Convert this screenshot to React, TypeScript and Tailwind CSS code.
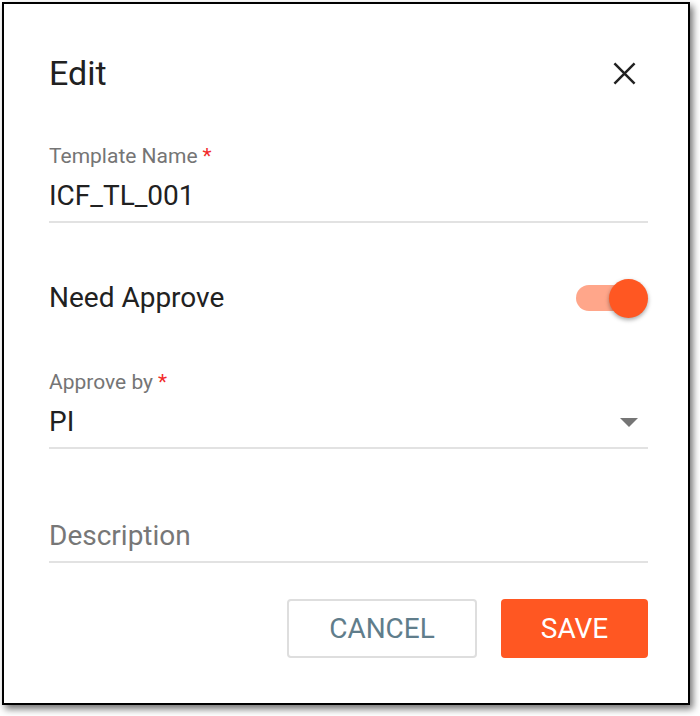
import React from "react";

function Label({ text }: { text: string }) {
  return (
    <div className="h-[24px] flex items-center text-[21px] text-[#757575] leading-none">
      {text}
      <span className="ml-[5px] text-[#f22b2b]">*</span>
    </div>
  );
}

export default function App() {
  return (
    <div className="w-[700px] h-[716px] bg-white relative" style={{ fontFamily: "Roboto, 'Noto Sans', sans-serif" }}>
      <div className="ml-[2px] mt-[2px] w-[688px] h-[703px] border-2 border-black bg-white shadow-[3px_4px_7px_rgba(0,0,0,0.55)] flex flex-col pl-[45px] pr-[40px]">
        <div className="mt-[44px] h-[50px] flex items-center justify-between">
          <div className="text-[34px] text-[#212121] leading-none">Edit</div>
          <svg width="23" height="23" viewBox="0 0 24 24" className="mr-[12px]">
            <path d="M1.5 1.5L22.5 22.5M22.5 1.5L1.5 22.5" stroke="#222" strokeWidth="2.6" strokeLinecap="butt" />
          </svg>
        </div>

        <div className="mt-[46px]">
          <Label text="Template Name" />
        </div>
        <div className="mt-[10px] h-[36px] flex items-center text-[28px] text-[#212121] leading-none">ICF_TL_001</div>
        <div className="mt-[7px] h-[2px] bg-[#e2e2e2]" />

        <div className="mt-[55px] h-[40px] flex items-center justify-between">
          <div className="text-[28px] text-[#212121] leading-none">Need Approve</div>
          <div className="relative w-[72px] h-[40px]">
            <div className="absolute left-0 top-[7px] w-[62px] h-[26px] rounded-full bg-[#ffa68a]" />
            <div className="absolute right-0 top-[1px] w-[39px] h-[39px] rounded-full bg-[#ff5722] shadow-[0_2px_4px_rgba(0,0,0,0.35)]" />
          </div>
        </div>

        <div className="mt-[52px]">
          <Label text="Approve by" />
        </div>
        <div className="mt-[10px] h-[36px] flex items-center justify-between text-[28px] text-[#212121] leading-none">
          <span>PI</span>
          <svg width="18" height="9" viewBox="0 0 18 9" className="mr-[10px]">
            <path d="M0 0L18 0L9 9Z" fill="#757575" />
          </svg>
        </div>
        <div className="mt-[7px] h-[2px] bg-[#e2e2e2]" />

        <div className="mt-[69px] h-[36px] flex items-center text-[28px] text-[#777777] leading-none">Description</div>
        <div className="mt-[7px] h-[2px] bg-[#e2e2e2]" />

        <div className="mt-[36px] flex justify-end gap-[24px]">
          <div className="w-[190px] h-[59px] border-2 border-[#dedede] rounded-[4px] flex items-center justify-center text-[28px] text-[#607d8b] leading-none">
            CANCEL
          </div>
          <div className="w-[147px] h-[59px] rounded-[4px] bg-[#ff5722] flex items-center justify-center text-[28px] text-white leading-none">
            SAVE
          </div>
        </div>
      </div>
    </div>
  );
}
